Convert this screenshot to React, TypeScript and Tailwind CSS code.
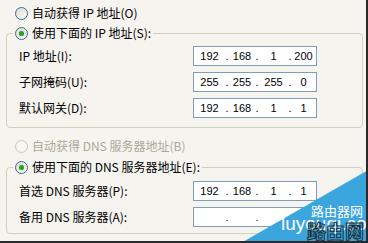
import React, { FC } from "react";

const font = "font-['Noto_Sans_CJK_SC','Noto_Sans',sans-serif]";

const Radio: FC<{ checked?: boolean; disabled?: boolean }> = ({
  checked,
  disabled,
}) => (
  <span
    className={
      "w-[13px] h-[13px] rounded-full border flex items-center justify-center shrink-0 " +
      (disabled
        ? "border-[#cac8bb] bg-[#f7f6f2]"
        : "border-[#3d6a92] bg-[linear-gradient(135deg,#dcd9cf,#ffffff)]")
    }
  >
    {checked && (
      <span className="w-[5px] h-[5px] rounded-full bg-[#2aa32a] shadow-[0_0_1px_#5fcf5f]" />
    )}
  </span>
);

const IpBox: FC<{ parts: string[] }> = ({ parts }) => (
  <div className="w-[124px] h-[20px] border border-[#7f9db9] bg-white flex items-center font-['Liberation_Sans',sans-serif] text-[11px] text-black">
    <span className="w-[31px] text-center">{parts[0]}</span>
    <span className="w-[4px] text-center">.</span>
    <span className="w-[26px] text-center">{parts[1]}</span>
    <span className="w-[4px] text-center">.</span>
    <span className="w-[29px] text-center">{parts[2]}</span>
    <span className="w-[4px] text-center">.</span>
    <span className="w-[23px] text-center">{parts[3]}</span>
  </div>
);

const Row: FC<{ label: string; parts: string[] }> = ({ label, parts }) => (
  <div className="flex items-center h-[20px]">
    <span className="w-[174px] leading-[14px]">{label}</span>
    <IpBox parts={parts} />
  </div>
);

const App: FC = () => {
  return (
    <div
      className={
        "relative w-[368px] h-[243px] overflow-hidden bg-[#f5f4ef] border-r-2 border-b-2 border-[#2a2a2a] text-[12px] text-black " +
        font
      }
    >
      <div className="pt-[6px]">
        <label className="flex items-center gap-[4px] ml-[15px] h-[14px] leading-[14px]">
          <Radio />
          <span>自动获得 IP 地址(O)</span>
        </label>

        <fieldset className="ml-[6px] mt-[6px] w-[357px] border border-[#d0d0bf] rounded-[4px]">
          <legend className="ml-[6px] px-[2px] flex items-center gap-[4px] h-[14px] leading-[14px]">
            <Radio checked />
            <span>使用下面的 IP 地址(S):</span>
          </legend>
          <div className="pl-[12px] pt-[6px] pb-[9px] flex flex-col gap-[6px]">
            <Row label="IP 地址(I):" parts={["192", "168", "1", "200"]} />
            <Row label="子网掩码(U):" parts={["255", "255", "255", "0"]} />
            <Row label="默认网关(D):" parts={["192", "168", "1", "1"]} />
          </div>
        </fieldset>

        <label className="flex items-center gap-[4px] ml-[15px] mt-[11px] h-[14px] leading-[14px] text-[#aca899]">
          <Radio disabled />
          <span>自动获得 DNS 服务器地址(B)</span>
        </label>

        <fieldset className="ml-[6px] mt-[7px] w-[357px] border border-[#d0d0bf] rounded-[4px]">
          <legend className="ml-[6px] px-[2px] flex items-center gap-[4px] h-[14px] leading-[14px]">
            <Radio checked />
            <span>使用下面的 DNS 服务器地址(E):</span>
          </legend>
          <div className="pl-[12px] pt-[7px] pb-[6px] flex flex-col gap-[6px]">
            <Row label="首选 DNS 服务器(P):" parts={["192", "168", "1", "1"]} />
            <Row label="备用 DNS 服务器(A):" parts={["", "", "", ""]} />
          </div>
        </fieldset>
      </div>

      {/* watermark */}
      <svg
        className="absolute left-0 top-0 pointer-events-none"
        width="368"
        height="243"
        viewBox="0 0 368 243"
      >
        <polygon points="241,243 368,170 368,243" fill="#3aa6dd" />
      </svg>
      <span className="absolute left-[311px] top-[203px] text-[13px] leading-[15px] text-white">
        路由器网
      </span>
      <span className="absolute left-[281px] top-[214px] text-[19px] leading-[20px] text-white font-['Liberation_Sans',sans-serif]">
        luyouqi.com
      </span>
      <span className="absolute left-[307px] top-[220px] text-[19px] leading-[22px] font-bold text-transparent [-webkit-text-stroke:1px_#1e2a33]">
        路由网
      </span>
    </div>
  );
};

export default App;
